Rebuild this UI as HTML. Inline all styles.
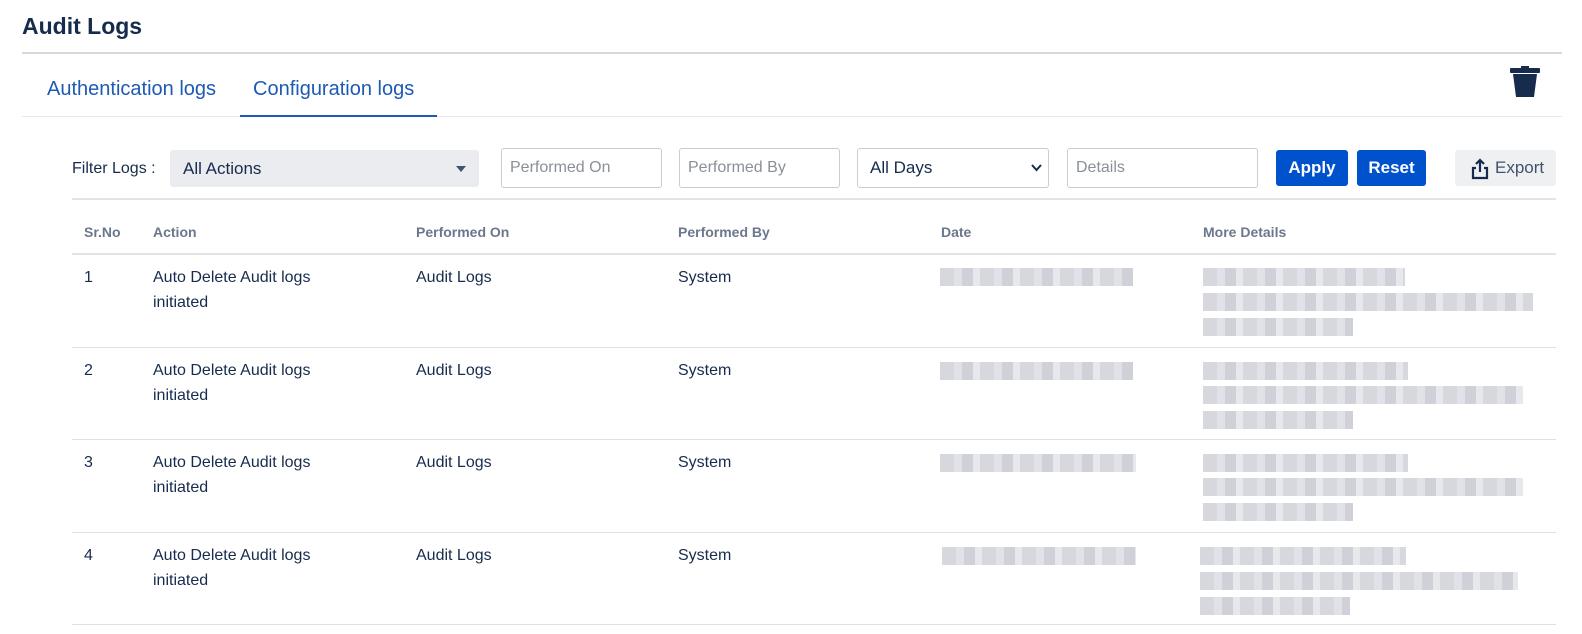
<!DOCTYPE html>
<html><head><meta charset="utf-8"><style>
*{margin:0;padding:0;box-sizing:border-box}
body{width:1582px;height:634px;background:#fff;position:relative;overflow:hidden;font-family:"Liberation Sans",sans-serif;color:#172b4d}
.a{position:absolute;white-space:nowrap}
.ln{position:absolute;height:1px;background:#dfe1e6}
.inp{position:absolute;top:148px;height:40px;border:1px solid #c9ccd2;border-radius:3px;font-size:16px;color:#8a8f99;padding:0 0 0 8px;line-height:38px}
.btn{position:absolute;top:150px;height:36px;border-radius:3px;background:#0052cc;color:#fff;font-weight:bold;font-size:17px;text-align:center;line-height:36px}
.th{position:absolute;top:224px;font-size:14px;color:#6b778c;font-weight:600}
.td{position:absolute;font-size:16px;line-height:25px;color:#172b4d}
.bl{position:absolute;height:18px;background:repeating-linear-gradient(90deg,#cfd1d8 0 14px,#dcdde3 14px 22px,#c7c9d1 22px 33px,#e3e4e9 33px 40px);opacity:.85}
</style></head><body>
<div class="a" style="left:22px;top:13px;font-size:23px;font-weight:600">Audit Logs</div>
<div class="ln" style="left:22px;top:52px;width:1540px;height:2px;background:#d6d8dc"></div>
<div class="a" style="left:47px;top:78px;font-size:20px;color:#1d5ab4">Authentication logs</div>
<div class="a" style="left:253px;top:78px;font-size:20px;color:#1d5ab4">Configuration logs</div>
<div class="ln" style="left:22px;top:116px;width:1540px;background:#e6e8eb"></div>
<div class="a" style="left:240px;top:115px;width:197px;height:2px;background:#1d5ab4"></div>
<svg class="a" style="left:1508px;top:65px" width="34" height="34" viewBox="0 0 34 34"><rect x="2" y="3" width="30" height="5" rx="1" fill="#172b4d"/><rect x="13" y="1" width="8" height="3" fill="#172b4d"/><path d="M5 9H29L26 32H8Z" fill="#172b4d"/></svg>
<div class="a" style="left:72px;top:160px;font-size:16px">Filter Logs :</div>
<div class="a" style="left:170px;top:150px;width:309px;height:37px;background:#ebecf0;border-radius:3px;font-size:17px;line-height:37px;padding-left:13px">All Actions</div>
<svg class="a" style="left:456px;top:166px" width="10" height="6"><path d="M0 0H10L5 6Z" fill="#42526e"/></svg>
<div class="inp" style="left:501px;width:161px">Performed On</div>
<div class="inp" style="left:679px;width:161px">Performed By</div>
<div class="inp" style="left:857px;width:192px;color:#172b4d;padding-left:12px;font-size:17px">All Days</div>
<svg class="a" style="left:1031px;top:164px" width="11" height="8"><path d="M1 1L5.5 6L10 1" stroke="#172b4d" stroke-width="2" fill="none"/></svg>
<div class="inp" style="left:1067px;width:191px">Details</div>
<div class="btn" style="left:1276px;width:72px">Apply</div>
<div class="btn" style="left:1357px;width:69px">Reset</div>
<div class="a" style="left:1455px;top:150px;width:101px;height:36px;background:#eff0f2;border-radius:3px;font-size:17px;line-height:36px;padding-left:40px;color:#42526e">Export</div>
<svg class="a" style="left:1471px;top:158px" width="18" height="22" viewBox="0 0 18 22"><path d="M9 2V14M5 6L9 2L13 6" stroke="#172b4d" stroke-width="2.2" fill="none"/><path d="M5 10H2V20H16V10H13" stroke="#172b4d" stroke-width="2.2" fill="none"/></svg>
<div class="ln" style="left:72px;top:198px;width:1484px;height:2px;background:#e1e3e6"></div>
<div class="th" style="left:84px">Sr.No</div>
<div class="th" style="left:153px">Action</div>
<div class="th" style="left:416px">Performed On</div>
<div class="th" style="left:678px">Performed By</div>
<div class="th" style="left:941px">Date</div>
<div class="th" style="left:1203px">More Details</div>
<div class="ln" style="left:72px;top:253px;width:1484px;height:2px;background:#e1e3e6"></div>

<div class="td" style="left:84px;top:265px">1</div>
<div class="td" style="left:153px;top:265px">Auto Delete Audit logs<br>initiated</div>
<div class="td" style="left:416px;top:265px">Audit Logs</div>
<div class="td" style="left:678px;top:265px">System</div>
<div class="bl" style="left:940px;top:268px;width:193px"></div>
<div class="bl" style="left:1203px;top:268px;width:202px"></div>
<div class="bl" style="left:1203px;top:293px;width:330px"></div>
<div class="bl" style="left:1203px;top:318px;width:150px"></div>
<div class="ln" style="left:72px;top:347px;width:1484px"></div>

<div class="td" style="left:84px;top:358px">2</div>
<div class="td" style="left:153px;top:358px">Auto Delete Audit logs<br>initiated</div>
<div class="td" style="left:416px;top:358px">Audit Logs</div>
<div class="td" style="left:678px;top:358px">System</div>
<div class="bl" style="left:940px;top:362px;width:193px"></div>
<div class="bl" style="left:1203px;top:362px;width:205px"></div>
<div class="bl" style="left:1203px;top:386px;width:320px"></div>
<div class="bl" style="left:1203px;top:411px;width:150px"></div>
<div class="ln" style="left:72px;top:439px;width:1484px"></div>

<div class="td" style="left:84px;top:450px">3</div>
<div class="td" style="left:153px;top:450px">Auto Delete Audit logs<br>initiated</div>
<div class="td" style="left:416px;top:450px">Audit Logs</div>
<div class="td" style="left:678px;top:450px">System</div>
<div class="bl" style="left:940px;top:454px;width:196px"></div>
<div class="bl" style="left:1203px;top:454px;width:205px"></div>
<div class="bl" style="left:1203px;top:478px;width:320px"></div>
<div class="bl" style="left:1203px;top:503px;width:150px"></div>
<div class="ln" style="left:72px;top:532px;width:1484px"></div>

<div class="td" style="left:84px;top:543px">4</div>
<div class="td" style="left:153px;top:543px">Auto Delete Audit logs<br>initiated</div>
<div class="td" style="left:416px;top:543px">Audit Logs</div>
<div class="td" style="left:678px;top:543px">System</div>
<div class="bl" style="left:942px;top:547px;width:194px"></div>
<div class="bl" style="left:1200px;top:547px;width:206px"></div>
<div class="bl" style="left:1200px;top:572px;width:318px"></div>
<div class="bl" style="left:1200px;top:597px;width:150px"></div>
<div class="ln" style="left:72px;top:624px;width:1484px"></div>
</body></html>
